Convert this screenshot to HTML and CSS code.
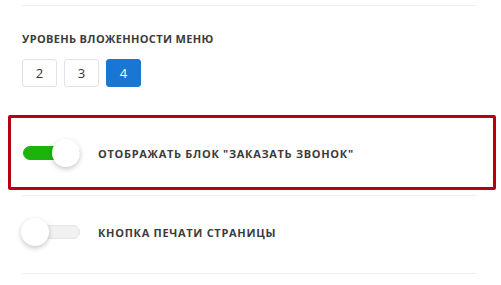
FILE: index.html
```
<!DOCTYPE html>
<html lang="ru">
<head>
    <meta charset="UTF-8">
    <title>Настройки меню</title>
    <link rel="stylesheet" href="styles.css">
</head>
<body>
    <div class="panel">
        <div class="divider first"></div>

        <div class="field-title">Уровень вложенности меню</div>
        <div class="levels">
            <button class="level">2</button>
            <button class="level">3</button>
            <button class="level active">4</button>
        </div>

        <div class="highlight">
            <div class="option">
                <span class="switch on"><span class="knob"></span></span>
                <span class="option-label">Отображать блок "Заказать звонок"</span>
            </div>
        </div>
        <div class="divider"></div>

        <div class="option plain">
            <span class="switch"><span class="knob"></span></span>
            <span class="option-label">Кнопка печати страницы</span>
        </div>
        <div class="divider"></div>
    </div>
</body>
</html>
```

FILE: styles.css
```
body {
    margin: 0;
    background: #fff;
    font-family: "Open Sans", "Liberation Sans", sans-serif;
    color: #333;
}

.panel {
    width: 454px;
    padding: 5px 25px 0 22px;
}

.divider {
    height: 1px;
    background: #efefef;
}
.highlight + .divider {
    margin-top: 5px;
}

.field-title {
    margin-top: 25px;
    font-size: 11px;
    line-height: 16px;
    font-weight: 700;
    letter-spacing: 0.35px;
    text-transform: uppercase;
    color: #3b3b3b;
}

.levels {
    display: flex;
    gap: 7px;
    margin-top: 12px;
}
.level {
    width: 35px;
    height: 28px;
    padding: 0;
    border: 1px solid #e2e2e2;
    border-radius: 3px;
    background: #fff;
    font-family: inherit;
    font-size: 13px;
    color: #333;
}
.level.active {
    background: #1976d2;
    border-color: #1976d2;
    color: #fff;
}

/* красная рамка-выделение */
.highlight {
    margin: 28px -20px 0 -14px;
    border: 3px solid #b6000b;
    border-radius: 2px;
    padding: 21px 11px 20px;
}

.option {
    display: flex;
    align-items: center;
    gap: 18px;
}
.option.plain {
    padding: 22px 0 27px;
}

.option-label {
    font-size: 11px;
    font-weight: 700;
    letter-spacing: 0.7px;
    text-transform: uppercase;
    color: #3b3b3b;
}

.switch {
    position: relative;
    width: 58px;
    height: 28px;
    flex-shrink: 0;
}
.switch::before {
    content: "";
    position: absolute;
    left: 0;
    right: 0;
    top: 7px;
    height: 14px;
    box-sizing: border-box;
    border-radius: 7px;
    background: #f1f1f1;
    border: 1px solid #e4e4e4;
}
.switch.on::before {
    background: #1db30d;
    border-color: #1db30d;
    left: 1px;
}
.knob {
    position: absolute;
    top: 0;
    left: -1px;
    width: 28px;
    height: 28px;
    border-radius: 50%;
    background: #fff;
    box-shadow: 0 2px 5px rgba(0, 0, 0, 0.22);
}
.switch.on .knob {
    left: 30px;
}
```
